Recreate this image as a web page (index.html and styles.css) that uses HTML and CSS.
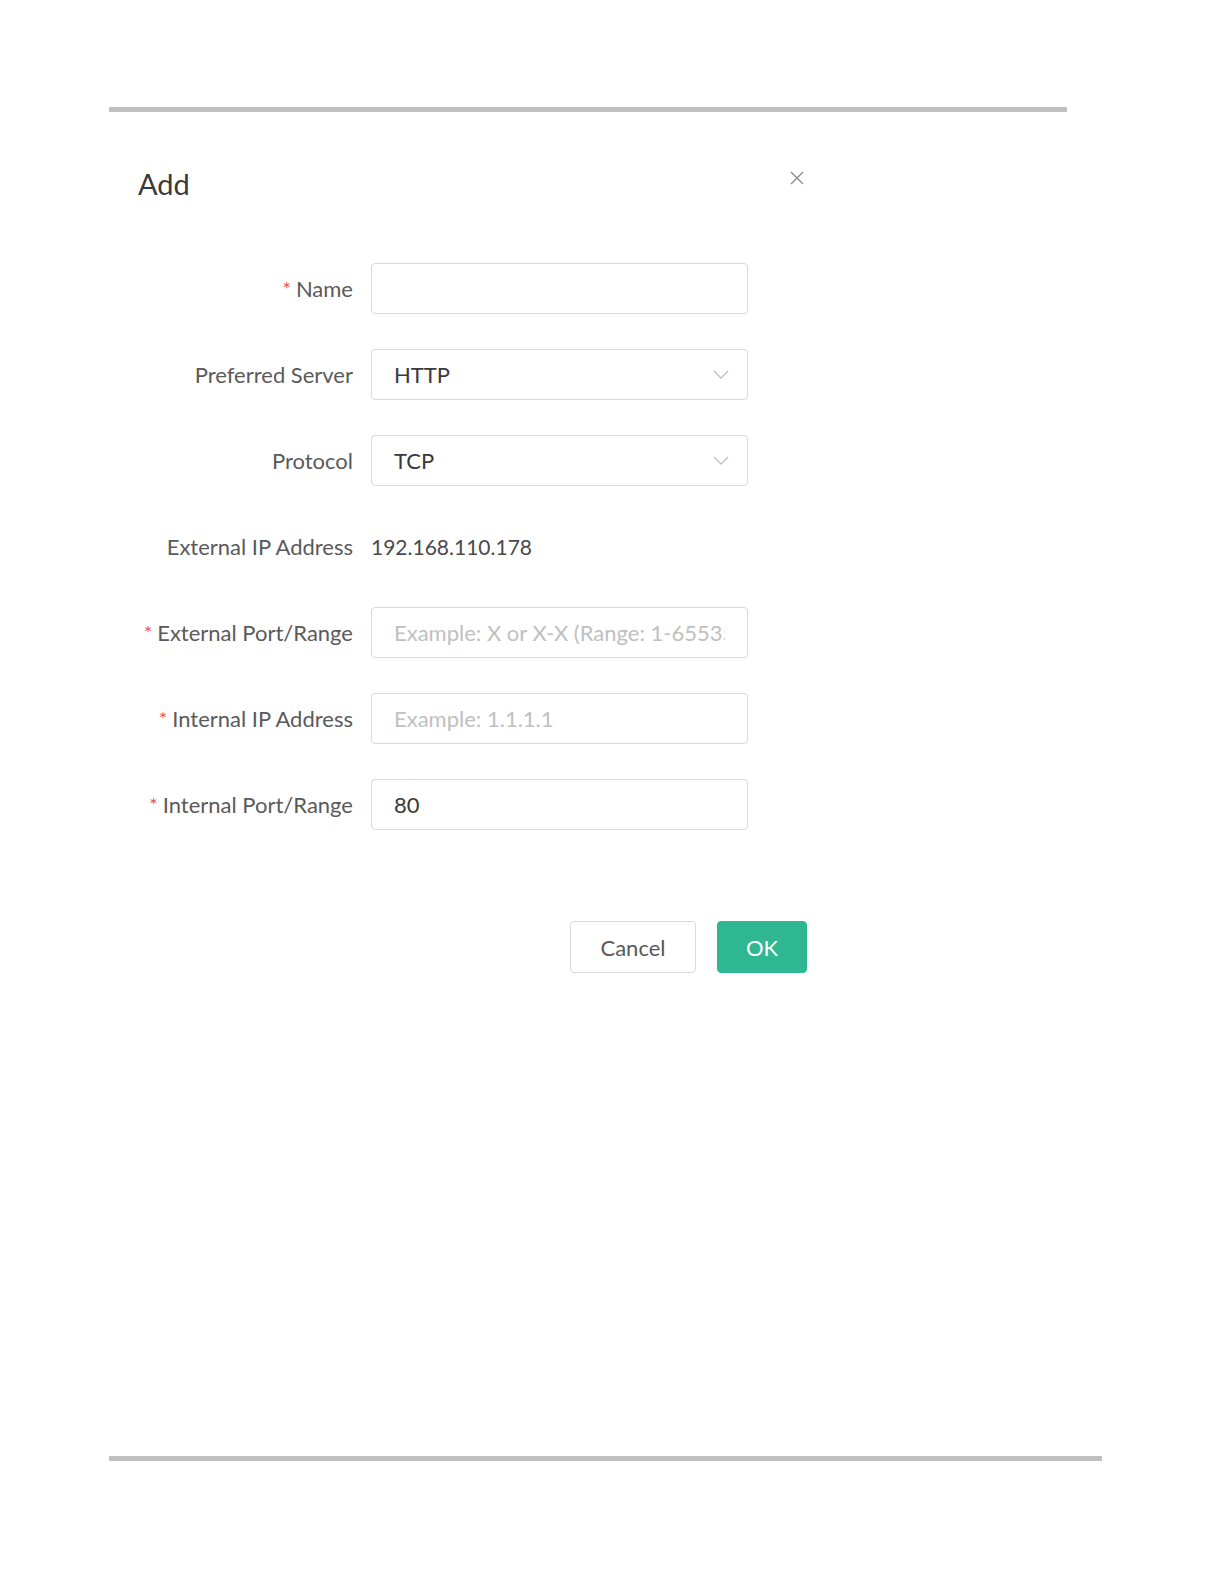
FILE: index.html
```html
<!DOCTYPE html>
<html lang="en">
<head>
<meta charset="utf-8">
<title>Add</title>
<link rel="stylesheet" href="styles.css">
</head>
<body>
<div class="page">
  <div class="rule rule-top"></div>
  <div class="dialog">
    <div class="dialog-header">
      <h1 class="dialog-title">Add</h1>
      <button class="close" aria-label="Close">
        <svg width="16" height="16" viewBox="0 0 16 16"><path d="M2 2 L14 14 M14 2 L2 14" stroke="#8c8c8c" stroke-width="1.4" fill="none"/></svg>
      </button>
    </div>
    <form class="form">
      <label class="label"><span class="req">*</span>Name</label>
      <input class="field" type="text">

      <label class="label">Preferred Server</label>
      <div class="field select"><span>HTTP</span>
        <svg class="chev" width="16" height="9" viewBox="0 0 16 9"><path d="M1 1 L8 8 L15 1" stroke="#bfbfbf" stroke-width="1.3" fill="none"/></svg>
      </div>

      <label class="label">Protocol</label>
      <div class="field select"><span>TCP</span>
        <svg class="chev" width="16" height="9" viewBox="0 0 16 9"><path d="M1 1 L8 8 L15 1" stroke="#bfbfbf" stroke-width="1.3" fill="none"/></svg>
      </div>

      <label class="label">External IP Address</label>
      <div class="static">192.168.110.178</div>

      <label class="label"><span class="req">*</span>External Port/Range</label>
      <input class="field" type="text" placeholder="Example: X or X-X (Range: 1-65535)">

      <label class="label"><span class="req">*</span>Internal IP Address</label>
      <input class="field" type="text" placeholder="Example: 1.1.1.1">

      <label class="label"><span class="req">*</span>Internal Port/Range</label>
      <input class="field" type="text" value="80">
    </form>
    <div class="footer">
      <button class="btn btn-cancel" type="button">Cancel</button>
      <button class="btn btn-ok" type="button">OK</button>
    </div>
  </div>
  <div class="rule rule-bottom"></div>
</div>
</body>
</html>
```
FILE: styles.css
```css
html, body {
  margin: 0;
  padding: 0;
  background: #ffffff;
}
body {
  font-family: Lato, "Noto Sans", "Liberation Sans", sans-serif;
  color: #333333;
}
.page {
  padding-top: 107px;
  padding-left: 109px;
}
.rule {
  height: 5px;
  background: #bfbfbf;
}
.rule-top {
  width: 958px;
}
.rule-bottom {
  width: 993px;
  margin-top: 483px;
}
.dialog {
  width: 698px;
}
.dialog-header {
  display: flex;
  justify-content: space-between;
  align-items: flex-start;
  padding-left: 29px;
  padding-right: 2px;
  height: 151px;
}
.dialog-title {
  margin: 0;
  margin-top: 54px;
  font-size: 29px;
  font-weight: 400;
  line-height: 36px;
  color: #3a3a3a;
}
.close {
  margin-top: 58px;
  padding: 0;
  border: none;
  background: transparent;
  width: 16px;
  height: 16px;
  display: block;
}
.close svg { display: block; }
.form {
  display: grid;
  grid-template-columns: 244px 377px;
  column-gap: 18px;
  row-gap: 35px;
  grid-auto-rows: 51px;
  margin: 0;
}
.label {
  display: flex;
  align-items: center;
  justify-content: flex-end;
  font-size: 22px;
  color: #5a5a5a;
  white-space: nowrap;
}
.req {
  color: #f0505a;
  font-size: 20px;
  margin-right: 5px;
  position: relative;
  top: -1px;
}
.field {
  box-sizing: border-box;
  width: 377px;
  height: 51px;
  border: 1px solid #d9d9d9;
  border-radius: 4px;
  padding: 0 22px;
  font-family: Lato, "Noto Sans", "Liberation Sans", sans-serif;
  font-size: 22px;
  color: #3a3a3a;
  background: #ffffff;
  outline: none;
  margin: 0;
}
.field::placeholder {
  color: #c0c0c0;
}
.select {
  display: flex;
  align-items: center;
  justify-content: space-between;
  padding-right: 18px;
}
.chev { display: block; }
.static {
  display: flex;
  align-items: center;
  font-size: 21px;
  color: #4a4a4a;
}
.footer {
  display: flex;
  justify-content: flex-end;
  gap: 21px;
  margin-top: 91px;
}
.btn {
  box-sizing: border-box;
  height: 52px;
  border-radius: 4px;
  font-family: Lato, "Noto Sans", "Liberation Sans", sans-serif;
  font-size: 22px;
  cursor: pointer;
}
.btn-cancel {
  width: 126px;
  border: 1px solid #d9d9d9;
  background: #ffffff;
  color: #595959;
}
.btn-ok {
  width: 90px;
  border: 1px solid #2fb792;
  background: #2fb792;
  color: #ffffff;
}
```
